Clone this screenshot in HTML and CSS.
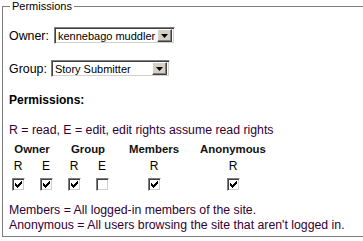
FILE: index.html
```html
<!DOCTYPE html>
<html>
<head>
<meta charset="utf-8">
<link rel="stylesheet" href="styles.css">
</head>
<body>
<fieldset class="perm">
  <legend class="legend">Permissions</legend>
  <div class="row row-owner">
    <span class="label">Owner:</span>
    <span class="select sel-owner"><span class="sel-text">kennebago muddler</span><span class="sel-btn"><svg width="7" height="4" viewBox="0 0 7 4"><path d="M0 0h7L3.5 4z" fill="#000"/></svg></span></span>
  </div>
  <div class="row row-group">
    <span class="label">Group:</span>
    <span class="select sel-group"><span class="sel-text">Story Submitter</span><span class="sel-btn"><svg width="7" height="4" viewBox="0 0 7 4"><path d="M0 0h7L3.5 4z" fill="#000"/></svg></span></span>
  </div>
  <div class="heading">Permissions:</div>
  <div class="note">R = read, E = edit, edit rights assume read rights</div>
  <table class="grid">
    <tr class="hdr">
      <th colspan="2">Owner</th>
      <th colspan="2">Group</th>
      <th>Members</th>
      <th>Anonymous</th>
    </tr>
    <tr class="sub">
      <td class="c1">R</td><td class="c2">E</td><td class="c3">R</td><td class="c4">E</td><td class="c5">R</td><td class="c6">R</td>
    </tr>
    <tr class="boxes">
      <td><span class="cb"><svg class="tick" width="13" height="13" viewBox="0 0 13 13" shape-rendering="crispEdges"><path d="M9 3h1v3h-1zM8 4h1v3h-1zM7 5h1v3h-1zM6 6h1v3h-1zM5 7h1v3h-1zM4 6h1v3h-1zM3 5h1v3h-1z" fill="#000"/></svg></span></td>
      <td><span class="cb"><svg class="tick" width="13" height="13" viewBox="0 0 13 13" shape-rendering="crispEdges"><path d="M9 3h1v3h-1zM8 4h1v3h-1zM7 5h1v3h-1zM6 6h1v3h-1zM5 7h1v3h-1zM4 6h1v3h-1zM3 5h1v3h-1z" fill="#000"/></svg></span></td>
      <td><span class="cb"><svg class="tick" width="13" height="13" viewBox="0 0 13 13" shape-rendering="crispEdges"><path d="M9 3h1v3h-1zM8 4h1v3h-1zM7 5h1v3h-1zM6 6h1v3h-1zM5 7h1v3h-1zM4 6h1v3h-1zM3 5h1v3h-1z" fill="#000"/></svg></span></td>
      <td><span class="cb"></span></td>
      <td><span class="cb"><svg class="tick" width="13" height="13" viewBox="0 0 13 13" shape-rendering="crispEdges"><path d="M9 3h1v3h-1zM8 4h1v3h-1zM7 5h1v3h-1zM6 6h1v3h-1zM5 7h1v3h-1zM4 6h1v3h-1zM3 5h1v3h-1z" fill="#000"/></svg></span></td>
      <td><span class="cb"><svg class="tick" width="13" height="13" viewBox="0 0 13 13" shape-rendering="crispEdges"><path d="M9 3h1v3h-1zM8 4h1v3h-1zM7 5h1v3h-1zM6 6h1v3h-1zM5 7h1v3h-1zM4 6h1v3h-1zM3 5h1v3h-1z" fill="#000"/></svg></span></td>
    </tr>
  </table>
  <div class="foot">Members = All logged-in members of the site.<br>Anonymous = All users browsing the site that aren't logged in.</div>
</fieldset>
</body>
</html>
```

FILE: styles.css
```css
html, body {
  margin: 0;
  padding: 0;
  background: #fff;
  overflow: hidden;
  width: 363px;
  height: 241px;
}
body {
  font-family: "Liberation Sans", Arial, sans-serif;
  font-size: 13px;
  color: #000;
}
.perm {
  box-sizing: border-box;
  margin: 0 0 0 2px;
  padding: 0 0 0 6px;
  min-width: 0;
  width: 361px;
  height: 237px;
  border-style: solid;
  border-width: 1px 0 1px 1px;
  border-color: #808080;
  box-shadow: inset 1px 0 0 #fff, 0 1px 0 #fff;
}
.legend {
  font-size: 11px;
  line-height: 13px;
  color: #000;
  padding: 0 2px;
  margin-left: 1px;
}
.row {
  display: flex;
  align-items: center;
  height: 17px;
  white-space: nowrap;
}
.row-owner { margin-top: 14px; }
.row-group { margin-top: 16px; }
.label { margin-right: 5px; font-size: 12.4px; }
.row-group .label { margin-right: 4px; }
.select {
  flex: none;
  display: flex;
  align-items: center;
  height: 17px;
  box-sizing: border-box;
  border: 1px solid;
  border-color: #808080 #fff #fff #808080;
  box-shadow: inset 1px 1px 0 #404040, inset -1px -1px 0 #d4d0c8;
  background: #fff;
  font-size: 11px;
  padding: 0 2px 0 3px;
  justify-content: space-between;
}
.sel-text { white-space: nowrap; }
.sel-owner { width: 121px; }
.sel-group { width: 119px; }
.sel-btn {
  flex: none;
  width: 13px;
  height: 11px;
  background: #d4d0c8;
  border: 1px solid;
  border-color: #fff #404040 #404040 #fff;
  box-shadow: inset -1px -1px 0 #808080;
  display: flex;
  align-items: center;
  justify-content: center;
}
.heading {
  font-weight: bold;
  font-size: 12px;
  line-height: 15px;
  margin-top: 16px;
}
.note {
  margin-top: 15px;
  color: #330033;
  font-size: 12.3px;
  line-height: 15px;
}
.grid {
  border-collapse: collapse;
  margin-top: 2px;
  margin-left: -5px;
}
.grid th, .grid td {
  padding: 0;
  text-align: center;
}
.hdr th {
  font-size: 11.4px;
  font-weight: bold;
  color: #111;
  height: 17px;
}
.sub td {
  font-size: 12px;
  color: #000;
  height: 18px;
}
.boxes td { height: 16px; }
.c1, .c2, .c3, .c4 { width: 28px; }
.c5 { width: 76px; }
.c6 { width: 82px; }
.cb {
  display: inline-block;
  position: relative;
  width: 13px;
  height: 13px;
  box-sizing: border-box;
  border: 1px solid;
  border-color: #808080 #fff #fff #808080;
  box-shadow: inset 1px 1px 0 #404040, inset -1px -1px 0 #d4d0c8;
  background: #fff;
  vertical-align: middle;
}
.tick {
  position: absolute;
  left: -1px;
  top: -1px;
}
.foot {
  margin-top: 12px;
  color: #330033;
  font-size: 12.3px;
  line-height: 15px;
}
```
